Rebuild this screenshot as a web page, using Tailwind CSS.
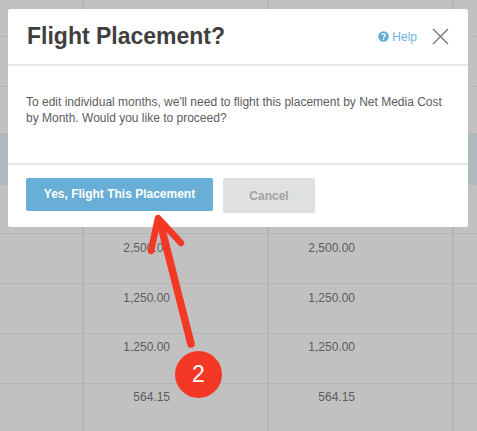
<!DOCTYPE html>
<html lang="en">
<head>
    <meta charset="UTF-8">
    <title>Flight Placement</title>
    <script src="https://cdn.jsdelivr.net/npm/@tailwindcss/browser@4"></script>
</head>
<body class="bg-[#c1c1c1] font-['Liberation_Sans',Arial,sans-serif]">
    <div class="relative w-[477px] h-[431px] overflow-hidden">
        <!-- Table behind the overlay -->
        <div class="grid grid-cols-[84px_185px_185px_23px] grid-rows-[37px_50px_47px_51px_49px_50px_50px_50px_47px] text-[12px] text-[#5c5c5c]">
            <div class="border-r-2 border-b border-[#b5b5b5]"></div><div class="border-r-2 border-b border-[#b5b5b5]"></div><div class="border-r-2 border-b border-[#b5b5b5]"></div><div class="border-b border-[#b5b5b5]"></div>
            <div class="border-r-2 border-b border-[#b5b5b5]"></div><div class="border-r-2 border-b border-[#b5b5b5]"></div><div class="border-r-2 border-b border-[#b5b5b5]"></div><div class="border-b border-[#b5b5b5]"></div>
            <div class="border-r-2 border-b border-[#b5b5b5]"></div><div class="border-r-2 border-b border-[#b5b5b5]"></div><div class="border-r-2 border-b border-[#b5b5b5]"></div><div class="border-b border-[#b5b5b5]"></div>
            <div class="bg-[#afb9bd]"></div><div class="bg-[#afb9bd]"></div><div class="bg-[#afb9bd]"></div><div class="bg-[#afb9bd]"></div>
            <div class="border-r-2 border-b border-[#b5b5b5]"></div><div class="border-r-2 border-b border-[#b5b5b5]"></div><div class="border-r-2 border-b border-[#b5b5b5]"></div><div class="border-b border-[#b5b5b5]"></div>

            <div class="border-r-2 border-b border-[#b5b5b5]"></div>
            <div class="border-r-2 border-b border-[#b5b5b5] pt-[5px] pr-[97px] text-right">2,500.00</div>
            <div class="border-r-2 border-b border-[#b5b5b5] pt-[5px] pr-[97px] text-right">2,500.00</div>
            <div class="border-b border-[#b5b5b5]"></div>

            <div class="border-r-2 border-b border-[#b5b5b5]"></div>
            <div class="border-r-2 border-b border-[#b5b5b5] pt-[5px] pr-[97px] text-right">1,250.00</div>
            <div class="border-r-2 border-b border-[#b5b5b5] pt-[5px] pr-[97px] text-right">1,250.00</div>
            <div class="border-b border-[#b5b5b5]"></div>

            <div class="border-r-2 border-b border-[#b5b5b5]"></div>
            <div class="border-r-2 border-b border-[#b5b5b5] pt-[4px] pr-[97px] text-right">1,250.00</div>
            <div class="border-r-2 border-b border-[#b5b5b5] pt-[4px] pr-[97px] text-right">1,250.00</div>
            <div class="border-b border-[#b5b5b5]"></div>

            <div class="border-r-2 border-[#b5b5b5]"></div>
            <div class="border-r-2 border-[#b5b5b5] pt-[4px] pr-[97px] text-right">564.15</div>
            <div class="border-r-2 border-[#b5b5b5] pt-[4px] pr-[97px] text-right">564.15</div>
            <div></div>
        </div>

        <!-- Dialog -->
        <div class="absolute left-[8px] top-[9px] w-[460px] h-[218px] bg-white rounded-[2px] flex flex-col">
            <div class="h-[57px] border-b-2 border-[#e6e6e6] flex items-center pl-[19px] pr-[19px] shrink-0">
                <h1 class="text-[23px] font-bold text-[#3f3f3f] leading-none">Flight Placement?</h1>
                <a class="ml-auto flex items-center gap-[3px] text-[12px] text-[#6fb3da] mr-[15px]">
                    <svg width="11" height="11" viewBox="0 0 11 11"><circle cx="5.5" cy="5.5" r="5.2" fill="#5fa9d4"/><path d="M3.8 4.3a1.7 1.6 0 1 1 2.7 1.3c-.6.4-1 .7-1 1.3" fill="none" stroke="#fff" stroke-width="1.3"/><circle cx="5.5" cy="8.4" r=".8" fill="#fff"/></svg>
                    Help
                </a>
                <svg width="17" height="17" viewBox="0 0 17 17"><path d="M1 1L16 16M16 1L1 16" stroke="#757575" stroke-width="1.4" fill="none"/></svg>
            </div>
            <div class="h-[99px] border-b-2 border-[#e6e6e6] px-[18px] pt-[28px] text-[12px] leading-[16px] text-[#5c5c5c] shrink-0">
                To edit individual months, we'll need to flight this placement by Net Media Cost<br>by Month. Would you like to proceed?
            </div>
            <div class="flex items-start gap-[10px] pl-[18px] pt-[13px]">
                <button class="w-[187px] h-[33px] pb-[2px] bg-[#68aed6] rounded-[2px] text-white text-[12px] font-bold">Yes, Flight This Placement</button>
                <button class="w-[92px] h-[35px] bg-[#dfe0e2] rounded-[2px] text-[#a3a3a3] text-[12px] font-bold">Cancel</button>
            </div>
        </div>

        <!-- Annotation -->
        <svg class="absolute left-0 top-0" width="477" height="431" viewBox="0 0 477 431">
            <path d="M191 344L160 222" fill="none" stroke="#f33826" stroke-width="7.5" stroke-linecap="round"/>
            <path d="M151 251L158 218L181 243" fill="none" stroke="#f33826" stroke-width="6.5" stroke-linecap="round" stroke-linejoin="round"/>
        </svg>
        <div class="absolute left-[175px] top-[351px] w-[47px] h-[47px] rounded-full bg-[#f33826] text-white text-[23px] flex items-center justify-center">2</div>
    </div>
</body>
</html>
